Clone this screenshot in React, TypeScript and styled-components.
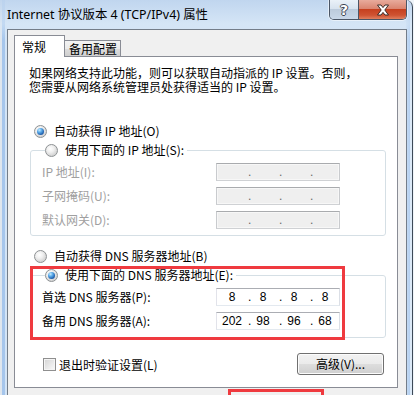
import React from 'react';
import styled, { createGlobalStyle } from 'styled-components';

const Global = createGlobalStyle`
  html, body { margin: 0; padding: 0; background: #eef3f8; }
  #root { width: 414px; height: 395px; overflow: hidden; }
  * { box-sizing: border-box; }
`;

const Window = styled.div`
  width: 413px;
  height: 395px;
  overflow: hidden;
  position: relative;
  display: flex;
  flex-direction: column;
  padding: 0 5px 0 7px;
  border-right: 1px solid #3e4957;
  border-top-right-radius: 7px;
  background:
    linear-gradient(180deg, rgba(190, 212, 238, 0.9) 0px, rgba(214, 230, 246, 0.6) 24px, rgba(0,0,0,0) 40px),
    linear-gradient(90deg, #dfe6ee 0px, #dfe6ee 2px, #a6c6ec 2px, #a6c6ec 5px, #d3e4f6 5px, #d3e4f6 406px, #c7dcf3 406px, #b3cff0 410px, #dce9f7 410px);
  font-family: "Noto Sans CJK SC", sans-serif;
  font-size: 12px;
  color: #000;
`;

const TitleBar = styled.div`
  height: 29px;
  flex: none;
  display: flex;
  align-items: flex-start;
`;

const Title = styled.div`
  flex: 1;
  margin-top: 7px;
  line-height: 16px;
  font-family: "Noto Sans", "Noto Sans CJK SC", sans-serif;
  font-size: 12.4px;
  color: #000;
  white-space: nowrap;
`;

const CaptionGroup = styled.div`
  display: flex;
  height: 20px;
  border: 1px solid #4b5666;
  border-top: none;
  border-radius: 0 0 5px 5px;
  overflow: hidden;
  box-shadow: 0 0 0 1px rgba(255,255,255,0.5);
`;

const CaptionButton = styled.div<{ $close?: boolean }>`
  width: ${p => (p.$close ? '48px' : '28px')};
  height: 19px;
  display: flex;
  align-items: center;
  justify-content: center;
  border-left: ${p => (p.$close ? '1px solid #4b5666' : 'none')};
  background: ${p =>
    p.$close
      ? 'linear-gradient(180deg, #e8ab9c 0%, #da8571 45%, #c6401f 50%, #cf5332 80%, #e07f5e 100%)'
      : 'linear-gradient(180deg, #eaf1f8 0%, #d8e3ef 45%, #bccbdc 50%, #c9d8e9 100%)'};
`;

const HelpGlyph = styled.span`
  font-family: "DejaVu Sans", sans-serif;
  font-weight: bold;
  font-size: 14px;
  line-height: 14px;
  color: #fff;
  text-shadow: -1px 0 #3c4450, 1px 0 #3c4450, 0 -1px #3c4450, 0 1px #3c4450;
`;

const Client = styled.div`
  flex: 1;
  width: 400px;
  background: #f0f0f0;
  border: 1px solid #737d89;
  border-bottom: none;
  padding: 5px 8px 0 6px;
  display: flex;
  flex-direction: column;
`;

const TabStrip = styled.div`
  height: 22px;
  display: flex;
  align-items: flex-end;
  position: relative;
  z-index: 1;
`;

const Tab = styled.div<{ $active?: boolean }>`
  height: ${p => (p.$active ? '22px' : '16px')};
  margin-bottom: ${p => (p.$active ? '0' : '1px')};
  width: ${p => (p.$active ? '51px' : '56px')};
  border: 1px solid #898c95;
  border-bottom: none;
  border-left: ${p => (p.$active ? '1px solid #898c95' : 'none')};
  background: ${p => (p.$active ? '#fff' : 'linear-gradient(180deg, #f3f3f3 0%, #ebebeb 50%, #dddddd 51%, #cfcfcf 100%)')};
  padding-left: ${p => (p.$active ? '7px' : '4px')};
  padding-top: ${p => (p.$active ? '1px' : '0')};
  display: flex;
  align-items: center;
  line-height: 14px;
  white-space: nowrap;
`;

const Panel = styled.div`
  margin-top: -1px;
  width: 384px;
  height: 332px;
  flex: none;
  background: #fff;
  border: 1px solid #898c95;
  position: relative;
  display: flex;
  flex-direction: column;
  align-items: flex-start;
`;

const Intro = styled.p`
  margin: 9px 0 0 14px;
  line-height: 14px;
  white-space: nowrap;
`;

const Line = styled.span`
  display: block;
`;

const Choice = styled.label<{ $mt?: number; $ml?: number }>`
  display: flex;
  align-items: center;
  height: 16px;
  gap: 7px;
  margin-top: ${p => p.$mt ?? 0}px;
  margin-left: ${p => p.$ml ?? 0}px;
  white-space: nowrap;
  line-height: 16px;
`;

const RadioDot = styled.span<{ $on?: boolean }>`
  width: 13px;
  height: 13px;
  flex: none;
  border-radius: 50%;
  border: 1px solid #8d9193;
  background: radial-gradient(circle at 40% 35%, #ffffff 0%, #f0f0f0 35%, #d5d5d5 70%, #e9e9e9 100%);
  position: relative;
  &::after {
    content: '';
    display: ${p => (p.$on ? 'block' : 'none')};
    position: absolute;
    left: 2px;
    top: 2px;
    width: 7px;
    height: 7px;
    border-radius: 50%;
    background: radial-gradient(circle at 35% 30%, #c6ecff 0%, #58a8e8 35%, #1b57a4 75%, #2c6bbd 100%);
  }
`;

const Group = styled.fieldset<{ $mt: number; $pb: number }>`
  margin: ${p => p.$mt}px 0 0 15px;
  width: 356px;
  min-width: 0;
  border: 1px solid #d5dfe5;
  border-radius: 3px;
  padding: 5px 0 ${p => p.$pb}px 11px;
`;

const Legend = styled.legend`
  margin-left: 3px;
  padding: 0 3px 0 0;
`;

const Rows = styled.div`
  display: grid;
  grid-template-columns: 174px 124px;
  row-gap: 6px;
  align-items: center;
`;

const FieldLabel = styled.span<{ $dim?: boolean }>`
  color: ${p => (p.$dim ? '#a0a0a0' : '#000')};
  line-height: 18px;
  white-space: nowrap;
`;

const IpBox = styled.div<{ $dim?: boolean }>`
  width: 124px;
  height: 18px;
  border: 1px solid;
  border-color: ${p => (p.$dim ? '#a9abae #c9cbce #cfd1d4 #c9cbce' : '#abadb3 #dbdfe6 #e3e9ef #e2e3ea')};
  background: ${p => (p.$dim ? '#efefef' : '#fff')};
  box-shadow: ${p => (p.$dim ? 'inset 0 0 0 1px #f7f7f7' : 'none')};
  display: flex;
  align-items: center;
  padding-left: 1px;
  font-family: "Liberation Sans", Arial, sans-serif;
  font-size: 12px;
  line-height: 16px;
`;

const Octet = styled.span`
  width: 28px;
  text-align: center;
`;

const Sep = styled.span<{ $dim?: boolean }>`
  width: 3px;
  margin-left: 2px;
  margin-right: -2px;
  color: ${p => (p.$dim ? '#6a6a6a' : '#000')};
`;

const Footer = styled.div`
  margin: 15px 0 0 28px;
  width: 341px;
  display: flex;
  align-items: center;
  justify-content: space-between;
`;

const CheckBox = styled.span`
  width: 13px;
  height: 13px;
  flex: none;
  border: 1px solid #8f8f8f;
  background: linear-gradient(135deg, #d3d3d3 0%, #ebebeb 60%, #fafafa 100%);
  box-shadow: inset 0 0 0 1px #f4f4f4;
`;

const CheckLabel = styled.label`
  display: flex;
  align-items: center;
  gap: 3px;
  white-space: nowrap;
`;

const PushButton = styled.div`
  width: 87px;
  height: 22px;
  border: 1px solid #707070;
  border-radius: 3px;
  background: linear-gradient(180deg, #f2f2f2 0%, #ebebeb 48%, #dddddd 52%, #cfcfcf 100%);
  box-shadow: inset 0 0 0 1px #fcfcfc;
  display: flex;
  align-items: center;
  justify-content: center;
  white-space: nowrap;
  line-height: 14px;
`;

const Annotation = styled.div`
  position: absolute;
  left: 15px;
  top: 209px;
  width: 315px;
  height: 74px;
  border: 3px solid #ef3a3f;
  pointer-events: none;
`;

const BottomBar = styled.div`
  margin: 1px 0 0 214px;
  width: 96px;
  height: 30px;
  flex: none;
  border: 3px solid #ef3a3f;
`;

function CloseIcon() {
  return (
    <svg width="14" height="12" viewBox="0 0 14 12">
      <path
        d="M1.5 1 H5 L7 3.6 L9 1 H12.5 L8.8 6 L12.5 11 H9 L7 8.4 L5 11 H1.5 L5.2 6 Z"
        fill="#fff"
        stroke="#3b2a26"
        strokeWidth="1"
        strokeLinejoin="round"
      />
    </svg>
  );
}

function Ip({ parts, dim }: { parts: string[]; dim?: boolean }) {
  return (
    <IpBox $dim={dim}>
      {parts.map((p, i) => (
        <React.Fragment key={i}>
          {i > 0 && <Sep $dim={dim}>.</Sep>}
          <Octet>{p}</Octet>
        </React.Fragment>
      ))}
    </IpBox>
  );
}

const empty = ['', '', '', ''];

export default function App() {
  return (
    <>
      <Global />
      <Window>
        <TitleBar>
          <Title>Internet 协议版本 4 (TCP/IPv4) 属性</Title>
          <CaptionGroup>
            <CaptionButton>
              <HelpGlyph>?</HelpGlyph>
            </CaptionButton>
            <CaptionButton $close>
              <CloseIcon />
            </CaptionButton>
          </CaptionGroup>
        </TitleBar>
        <Client>
          <TabStrip>
            <Tab $active>常规</Tab>
            <Tab>备用配置</Tab>
          </TabStrip>
          <Panel>
            <Intro>
              <Line>如果网络支持此功能，则可以获取自动指派的 IP 设置。否则，</Line>
              <Line>您需要从网络系统管理员处获得适当的 IP 设置。</Line>
            </Intro>
            <Choice $mt={29} $ml={19}>
              <RadioDot $on />
              自动获得 IP 地址(O)
            </Choice>
            <Group $mt={3} $pb={6}>
              <Legend>
                <Choice>
                  <RadioDot />
                  使用下面的 IP 地址(S):
                </Choice>
              </Legend>
              <Rows>
                <FieldLabel $dim>IP 地址(I):</FieldLabel>
                <Ip parts={empty} dim />
                <FieldLabel $dim>子网掩码(U):</FieldLabel>
                <Ip parts={empty} dim />
                <FieldLabel $dim>默认网关(D):</FieldLabel>
                <Ip parts={empty} dim />
              </Rows>
            </Group>
            <Choice $mt={12} $ml={19}>
              <RadioDot />
              自动获得 DNS 服务器地址(B)
            </Choice>
            <Group $mt={3} $pb={7}>
              <Legend>
                <Choice>
                  <RadioDot $on />
                  使用下面的 DNS 服务器地址(E):
                </Choice>
              </Legend>
              <Rows>
                <FieldLabel>首选 DNS 服务器(P):</FieldLabel>
                <Ip parts={['8', '8', '8', '8']} />
                <FieldLabel>备用 DNS 服务器(A):</FieldLabel>
                <Ip parts={['202', '98', '96', '68']} />
              </Rows>
            </Group>
            <Footer>
              <CheckLabel>
                <CheckBox />
                退出时验证设置(L)
              </CheckLabel>
              <PushButton>高级(V)...</PushButton>
            </Footer>
            <Annotation />
          </Panel>
          <BottomBar />
        </Client>
      </Window>
    </>
  );
}
